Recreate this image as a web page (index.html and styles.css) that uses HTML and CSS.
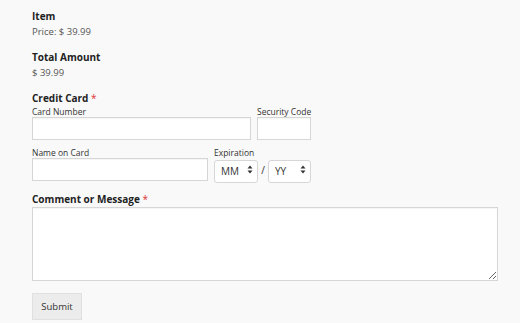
FILE: index.html
```html
<!DOCTYPE html>
<html lang="en">
<head>
    <meta charset="UTF-8">
    <meta name="viewport" content="width=device-width, initial-scale=1.0">
    <title>Payment Form</title>
    <link rel="stylesheet" href="styles.css">
</head>
<body>
    <form class="pay-form">
        <div class="field">
            <div class="field-title">Item</div>
            <div class="field-value">Price: $ 39.99</div>
        </div>

        <div class="field">
            <div class="field-title">Total Amount</div>
            <div class="field-value">$ 39.99</div>
        </div>

        <div class="field">
            <div class="field-title">Credit Card <span class="req">*</span></div>
            <div class="row">
                <div class="sub">
                    <label class="sub-label">Card Number</label>
                    <input class="input card-number" type="text">
                </div>
                <div class="sub">
                    <label class="sub-label">Security Code</label>
                    <input class="input cvc" type="text">
                </div>
            </div>
            <div class="row row-second">
                <div class="sub">
                    <label class="sub-label">Name on Card</label>
                    <input class="input card-name" type="text">
                </div>
                <div class="sub">
                    <label class="sub-label">Expiration</label>
                    <div class="expiry">
                        <div class="select-wrap month">
                            <select class="select"><option>MM</option></select>
                            <svg class="arrows" width="6" height="9" viewBox="0 0 6 9"><path d="M0.5 3.5 L3 0.5 L5.5 3.5 Z M0.5 5.5 L3 8.5 L5.5 5.5 Z" fill="#333"/></svg>
                        </div>
                        <span class="slash">/</span>
                        <div class="select-wrap year">
                            <select class="select"><option>YY</option></select>
                            <svg class="arrows" width="6" height="9" viewBox="0 0 6 9"><path d="M0.5 3.5 L3 0.5 L5.5 3.5 Z M0.5 5.5 L3 8.5 L5.5 5.5 Z" fill="#333"/></svg>
                        </div>
                    </div>
                </div>
            </div>
        </div>

        <div class="field field-message">
            <div class="field-title">Comment or Message <span class="req">*</span></div>
            <textarea class="input message"></textarea>
        </div>

        <button class="submit" type="button">Submit</button>
    </form>
</body>
</html>
```

FILE: styles.css
```css
/* Basic Reset */
* {
    margin: 0;
    padding: 0;
    box-sizing: border-box;
}

body {
    font-family: 'Open Sans', 'DejaVu Sans', sans-serif;
    background-color: #f9f9f9;
    color: #333;
    padding: 8px 0 0 32px;
}

.field {
    margin-bottom: 9px;
}

.field-message {
    margin-top: 10px;
}

.field-title {
    font-size: 10px;
    font-weight: bold;
    line-height: 16px;
    color: #222;
}

.field-value {
    font-size: 9.5px;
    line-height: 16px;
    color: #555;
}

.req {
    color: #d33;
    font-weight: normal;
}

.row {
    display: flex;
    gap: 6px;
}

.row-second {
    margin-top: 7px;
}

.sub {
    display: flex;
    flex-direction: column;
}

.sub-label {
    font-size: 8.5px;
    line-height: 11px;
    color: #333;
}

.input {
    display: block;
    height: 23px;
    background-color: #fff;
    border: 1px solid #d6d6d6;
    box-shadow: inset 0 1px 1px rgba(0, 0, 0, 0.04);
    font-family: inherit;
}

.card-number {
    width: 219px;
}

.cvc {
    width: 54px;
}

.card-name {
    width: 176px;
}

.expiry {
    display: flex;
    align-items: center;
}

.select-wrap {
    position: relative;
    height: 23px;
}

.select-wrap.month {
    width: 44px;
}

.select-wrap.year {
    width: 43px;
}

.select {
    appearance: none;
    -webkit-appearance: none;
    width: 100%;
    height: 100%;
    background-color: #fff;
    border: 1px solid #d6d6d6;
    border-radius: 3px;
    font-family: inherit;
    font-size: 10px;
    color: #333;
    padding-left: 6px;
}

.arrows {
    position: absolute;
    right: 5px;
    top: 7px;
}

.slash {
    font-size: 10px;
    color: #333;
    width: 10px;
    text-align: center;
}

.message {
    width: 466px;
    height: 74px;
    resize: vertical;
}

.submit {
    display: block;
    margin-top: 12px;
    width: 50px;
    height: 27px;
    background-color: #ececec;
    border: 1px solid #e0e0e0;
    font-family: inherit;
    font-size: 9.5px;
    color: #333;
}
```
